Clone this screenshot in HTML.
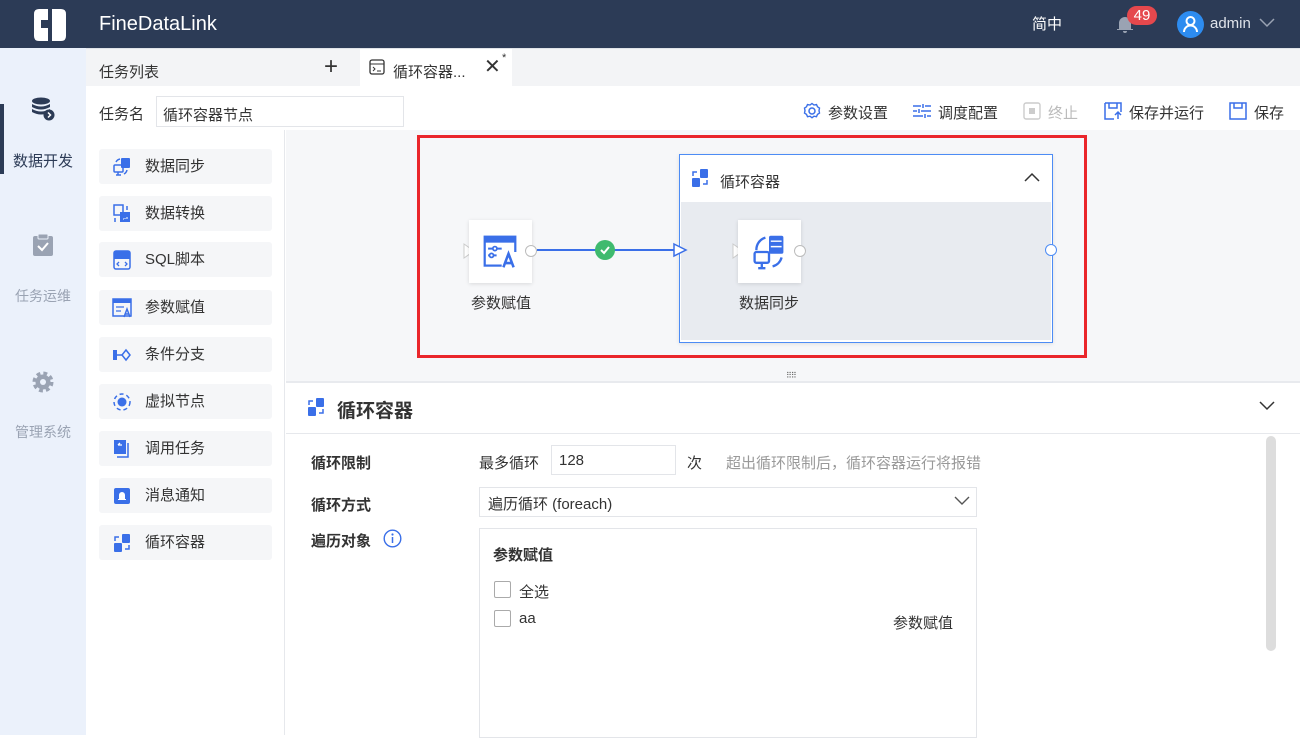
<!DOCTYPE html>
<html><head><meta charset="utf-8"><style>
*{margin:0;padding:0;box-sizing:border-box}
body{width:1300px;height:735px;overflow:hidden;font-family:"Liberation Sans","Noto Sans CJK SC",sans-serif;font-size:14px;color:#333;background:#fff;position:relative}
.a{position:absolute}
.top{left:0;top:0;width:1300px;height:48px;background:#2c3b56}
.nav{left:0;top:48px;width:86px;height:687px;background:#ebf1fb}
.navi{width:86px;text-align:center;font-size:14px;color:#9aa3b3}
.tabs{left:86px;top:48px;width:1214px;height:38px;background:#f3f4f6;border-top:1px solid #e0e3e8}
.pal{left:86px;top:130px;width:199px;height:605px;background:#fff;border-right:1px solid #e6e8ec}
.item{position:absolute;left:13px;width:173px;height:35px;background:#f5f6f8;border-radius:3px;font-size:15px;color:#333;line-height:35px;padding-left:46px}
.item svg{position:absolute;left:13px;top:8px}
.canvas{left:286px;top:130px;width:1014px;height:251px;background:#f6f7f9}
.tb{top:102px;font-size:15px;color:#333}
.lab{font-size:15px;font-weight:bold;color:#333}
</style></head><body>
<div class="a top">
 <svg class="a" style="left:33px;top:8px" width="34" height="34" viewBox="0 0 34 34"><path d="M1 6q0-5 5-5h22q5 0 5 5v22q0 5-5 5H6q-5 0-5-5z" fill="#fff"/><path d="M15 1h4v32h-4z" fill="#2c3b56"/><path d="M8 12h7v8H8z" fill="#2c3b56"/><path d="M19 20h6v13h-6z" fill="#2c3b56" opacity="0"/></svg>
 <div class="a" style="left:99px;top:13px;font-size:20px;color:#fff">FineDataLink</div>
 <div class="a" style="left:1032px;top:13px;font-size:15px;color:#fff">简中</div>
 <svg class="a" style="left:1116px;top:15px" width="18" height="18" viewBox="0 0 18 18"><path d="M3 14V8a6 6 0 0 1 12 0v6h2v1H1v-1z M7 16h4a2 2 0 0 1-4 0z" fill="#9aa3b3"/></svg>
 <div class="a" style="left:1127px;top:6px;width:30px;height:19px;background:#e5484d;border-radius:10px;color:#fff;font-size:15px;text-align:center;line-height:19px">49</div>
 <div class="a" style="left:1177px;top:11px;width:27px;height:27px;border-radius:50%;background:#2d8cf0"></div>
 <svg class="a" style="left:1177px;top:11px" width="27" height="27" viewBox="0 0 27 27"><circle cx="13.5" cy="10" r="4" fill="none" stroke="#fff" stroke-width="2"/><path d="M7 21a6.5 6.5 0 0 1 13 0" fill="none" stroke="#fff" stroke-width="2"/></svg>
 <div class="a" style="left:1210px;top:15px;font-size:15px;color:#dfe3ea">admin</div>
 <svg class="a" style="left:1259px;top:18px" width="16" height="10" viewBox="0 0 16 10"><path d="M1 1l7 7 7-7" fill="none" stroke="#9aa3b3" stroke-width="1.5"/></svg>
</div>
<div class="a nav">
 <div class="a" style="left:0;top:56px;width:4px;height:70px;background:#2c3b56"></div>
 <svg class="a" style="left:30px;top:48px" width="26" height="26" viewBox="0 0 26 26"><ellipse cx="11" cy="5" rx="9" ry="3.5" fill="#2c3b56"/><path d="M2 8q9 5 18 0v3q-9 5-18 0z M2 13q9 5 18 0v3q-9 5-18 0z" fill="#2c3b56"/><circle cx="19" cy="19" r="5.5" fill="#2c3b56"/><path d="M18 16.5l2.5 2.5-2.5 2.5" stroke="#fff" stroke-width="1.5" fill="none"/></svg>
 <div class="a navi" style="top:102px;color:#2c3b56;font-size:15px">数据开发</div>
 <svg class="a" style="left:32px;top:185px" width="22" height="24" viewBox="0 0 22 24"><rect x="1" y="3" width="20" height="20" rx="2" fill="#9aa3b3"/><rect x="6" y="1" width="10" height="5" rx="1" fill="#9aa3b3" stroke="#ebf1fb"/><path d="M6 13l4 4 6-7" stroke="#fff" stroke-width="2" fill="none"/></svg>
 <div class="a navi" style="top:238px">任务运维</div>
 <svg class="a" style="left:30px;top:321px" width="26" height="26" viewBox="0 0 26 26"><circle cx="13" cy="13" r="8" fill="none" stroke="#9aa3b3" stroke-width="5" stroke-dasharray="3.5 2.8"/><circle cx="13" cy="13" r="7.5" fill="#9aa3b3"/><circle cx="13" cy="13" r="3" fill="#ebf1fb"/></svg>
 <div class="a navi" style="top:374px">管理系统</div>
</div>
<div class="a tabs">
 <div class="a" style="left:13px;top:12px;font-size:15px;color:#333">任务列表</div>
 <div class="a" style="left:238px;top:4px;font-size:24px;color:#333;font-weight:300">+</div>
 <div class="a" style="left:274px;top:0;width:152px;height:38px;background:#fff"></div>
 <svg class="a" style="left:283px;top:10px" width="16" height="16" viewBox="0 0 16 16"><rect x="1" y="1" width="14" height="14" rx="2" fill="none" stroke="#333" stroke-width="1.3"/><path d="M1 5h14M4 8l2 2-2 2M8 12h4" stroke="#333" fill="none"/></svg>
 <div class="a" style="left:307px;top:12px;font-size:15px">循环容器...</div>
 <div class="a" style="left:398px;top:5px;font-size:20px;color:#333">✕</div>
 <div class="a" style="left:416px;top:3px;font-size:11px">*</div>
</div>
<div class="a" style="left:99px;top:103px;font-size:15px">任务名</div>
<div class="a" style="left:156px;top:96px;width:248px;height:31px;border:1px solid #e3e5e9;font-size:15px;padding:7px 6px">循环容器节点</div>
<svg class="a" style="left:803px;top:102px" width="18" height="18" viewBox="0 0 18 18"><circle cx="9" cy="9" r="3" fill="none" stroke="#3a6fe8" stroke-width="1.5"/><path d="M9 1.5l2 1.5 2.5-.5 1 2.3 2 1.3-.5 2.5.5 2.5-2 1.3-1 2.3-2.5-.5-2 1.5-2-1.5-2.5.5-1-2.3-2-1.3.5-2.5-.5-2.5 2-1.3 1-2.3 2.5.5z" fill="none" stroke="#3a6fe8" stroke-width="1.4"/></svg>
<div class="a tb" style="left:828px">参数设置</div>
<svg class="a" style="left:913px;top:104px" width="18" height="14" viewBox="0 0 18 14"><path d="M0 2h8M12 2h6M0 7h4M8 7h10M0 12h10M14 12h4M10 0v4M6 5v4M12 10v4" stroke="#3a6fe8" stroke-width="1.5"/></svg>
<div class="a tb" style="left:938px">调度配置</div>
<svg class="a" style="left:1023px;top:102px" width="18" height="18" viewBox="0 0 18 18"><rect x="1" y="1" width="16" height="16" rx="2" fill="none" stroke="#ccc" stroke-width="1.4"/><rect x="6" y="6" width="6" height="6" fill="#ccc"/></svg>
<div class="a tb" style="left:1048px;color:#bbb">终止</div>
<svg class="a" style="left:1104px;top:102px" width="18" height="18" viewBox="0 0 18 18"><path d="M1 1h16v9M1 1v16h9M5 1v5h8V1" fill="none" stroke="#3a6fe8" stroke-width="1.5"/><path d="M14 17v-6M11 13l3-3 3 3" stroke="#3a6fe8" stroke-width="1.5" fill="none"/></svg>
<div class="a tb" style="left:1129px">保存并运行</div>
<svg class="a" style="left:1229px;top:102px" width="18" height="18" viewBox="0 0 18 18"><path d="M1 1h16v16H1z M5 1v5h8V1" fill="none" stroke="#3a6fe8" stroke-width="1.5"/></svg>
<div class="a tb" style="left:1254px">保存</div>

<div class="a pal">
 <div class="item" style="top:19px"><svg width="20" height="20" viewBox="0 0 20 20"><rect x="9" y="1" width="9" height="10" rx="1" fill="#3a6fe8"/><rect x="2" y="8" width="9" height="7" rx="1" fill="none" stroke="#3a6fe8" stroke-width="1.5"/><path d="M4 18h5M6 15v3M4 5a6 6 0 0 1 4-3M15 13a6 6 0 0 1-3 4" stroke="#3a6fe8" stroke-width="1.5" fill="none"/></svg>数据同步</div>
 <div class="item" style="top:66px"><svg width="20" height="20" viewBox="0 0 20 20"><rect x="2" y="1" width="9" height="10" fill="none" stroke="#3a6fe8" stroke-width="1.5"/><rect x="8" y="8" width="10" height="10" fill="#3a6fe8"/><path d="M11 15h1M13 14v1M15 13v2" stroke="#fff"/><path d="M15 2v4M3 14v4" stroke="#3a6fe8" stroke-width="1.5"/></svg>数据转换</div>
 <div class="item" style="top:112px"><svg width="20" height="20" viewBox="0 0 20 20"><rect x="2" y="1" width="16" height="18" rx="2" fill="none" stroke="#3a6fe8" stroke-width="1.5"/><rect x="2" y="1" width="16" height="8" fill="#3a6fe8"/><path d="M7 12l-2 2 2 2M13 12l2 2-2 2" stroke="#3a6fe8" fill="none" stroke-width="1.3"/></svg>SQL脚本</div>
 <div class="item" style="top:160px"><svg width="20" height="20" viewBox="0 0 20 20"><rect x="1" y="1" width="18" height="17" fill="none" stroke="#3a6fe8" stroke-width="1.5"/><rect x="1" y="1" width="18" height="4" fill="#3a6fe8"/><path d="M4 9h8M4 13h5" stroke="#3a6fe8" stroke-width="1.3"/><path d="M12 19l3-8 3 8M13 16h4" stroke="#3a6fe8" stroke-width="1.5" fill="none"/></svg>参数赋值</div>
 <div class="item" style="top:207px"><svg width="20" height="20" viewBox="0 0 20 20"><rect x="1" y="5" width="4" height="10" fill="#3a6fe8"/><path d="M5 10h5" stroke="#3a6fe8" stroke-width="1.5"/><path d="M14 5l4 5-4 5-4-5z" fill="none" stroke="#3a6fe8" stroke-width="1.5"/></svg>条件分支</div>
 <div class="item" style="top:254px"><svg width="20" height="20" viewBox="0 0 20 20"><circle cx="10" cy="10" r="4.5" fill="#3a6fe8"/><circle cx="10" cy="10" r="8" fill="none" stroke="#3a6fe8" stroke-width="1.5" stroke-dasharray="4 3"/></svg>虚拟节点</div>
 <div class="item" style="top:301px"><svg width="20" height="20" viewBox="0 0 20 20"><rect x="2" y="1" width="12" height="14" fill="#3a6fe8"/><path d="M16 4v14H5" stroke="#3a6fe8" stroke-width="1.5" fill="none"/><path d="M6 6h4M6 6l2-2" stroke="#fff" stroke-width="1.3" fill="none"/></svg>调用任务</div>
 <div class="item" style="top:348px"><svg width="20" height="20" viewBox="0 0 20 20"><rect x="2" y="2" width="16" height="16" rx="2" fill="#3a6fe8"/><path d="M7 13V9a3 3 0 0 1 6 0v4h1v1H6v-1z" fill="#fff"/></svg>消息通知</div>
 <div class="item" style="top:395px"><svg width="20" height="20" viewBox="0 0 20 20"><rect x="10" y="1" width="8" height="9" rx="1" fill="#3a6fe8"/><rect x="2" y="10" width="8" height="9" rx="1" fill="#3a6fe8"/><path d="M3 8V4h4M17 12v4h-4" stroke="#3a6fe8" stroke-width="1.5" fill="none"/></svg>循环容器</div>
</div>

<div class="a canvas"></div>
<div class="a" style="left:679px;top:154px;width:374px;height:189px;border:1px solid #4d8cf5;background:#fff;box-shadow:0 1px 4px rgba(0,0,0,.1)">
 <div class="a" style="left:1px;top:47px;width:370px;height:138px;background:#e8ebf0"></div>
 <svg class="a" style="left:10px;top:13px" width="20" height="20" viewBox="0 0 20 20"><rect x="10" y="1" width="8" height="9" rx="1" fill="#3a6fe8"/><rect x="2" y="10" width="8" height="9" rx="1" fill="#3a6fe8"/><path d="M3 8V4h4M17 12v4h-4" stroke="#3a6fe8" stroke-width="1.5" fill="none"/></svg>
 <div class="a" style="left:40px;top:16px;font-size:15px">循环容器</div>
 <svg class="a" style="left:344px;top:17px" width="16" height="10" viewBox="0 0 16 10"><path d="M1 9l7-7 7 7" stroke="#333" stroke-width="1.5" fill="none"/></svg>
</div>
<div class="a" style="left:1045px;top:244px;width:12px;height:12px;border-radius:50%;border:1.5px solid #4d8cf5;background:#fff"></div>
<div class="a" style="left:537px;top:249px;width:138px;height:2px;background:#3a6fe8"></div>
<svg class="a" style="left:672px;top:242px" width="16" height="16" viewBox="0 0 16 16"><path d="M2 2l12 6-12 6z" fill="#fff" stroke="#3a6fe8" stroke-width="1.5"/></svg>
<div class="a" style="left:595px;top:240px;width:20px;height:20px;border-radius:50%;background:#3fba6e"></div>
<svg class="a" style="left:595px;top:240px" width="20" height="20" viewBox="0 0 20 20"><path d="M6 10l3 3 5-6" stroke="#fff" stroke-width="2" fill="none"/></svg>
<svg class="a" style="left:463px;top:243px" width="12" height="16" viewBox="0 0 12 16"><path d="M1 1l10 7-10 7z" fill="#fff" stroke="#ccc"/></svg>
<div class="a" style="left:469px;top:220px;width:63px;height:63px;background:#fff;box-shadow:0 1px 4px rgba(0,0,0,.12)"></div>
<svg class="a" style="left:483px;top:234px" width="34" height="36" viewBox="0 0 20 20"><rect x="1" y="1" width="18" height="17" fill="none" stroke="#3a6fe8" stroke-width="1.3"/><rect x="1" y="1" width="18" height="3.5" fill="#3a6fe8"/><path d="M3 8h8M3 12h5" stroke="#3a6fe8" stroke-width="1.2"/><circle cx="7" cy="8" r="1.2" fill="#fff" stroke="#3a6fe8"/><circle cx="5" cy="12" r="1.2" fill="#fff" stroke="#3a6fe8"/><rect x="11" y="10" width="9" height="10" fill="#fff"/><path d="M12 19l3-8 3 8M13 16.5h4" stroke="#3a6fe8" stroke-width="1.5" fill="none"/></svg>
<div class="a" style="left:525px;top:245px;width:12px;height:12px;border-radius:50%;border:1px solid #bbb;background:#fff"></div>
<div class="a" style="left:471px;top:292px;font-size:15px">参数赋值</div>
<svg class="a" style="left:732px;top:243px" width="12" height="16" viewBox="0 0 12 16"><path d="M1 1l10 7-10 7z" fill="#fff" stroke="#ccc"/></svg>
<div class="a" style="left:738px;top:220px;width:63px;height:63px;background:#fff;box-shadow:0 1px 4px rgba(0,0,0,.12)"></div>
<svg class="a" style="left:751px;top:234px" width="36" height="36" viewBox="0 0 20 20"><rect x="10" y="1" width="8" height="10" rx="1" fill="#3a6fe8"/><path d="M11 4h6M11 7h6" stroke="#fff" stroke-width=".8"/><rect x="2" y="10" width="8" height="6" rx="1" fill="#fff" stroke="#3a6fe8" stroke-width="1.3"/><path d="M4 19h4M6 16v3M3 9a7 7 0 0 1 5-7M17 13a7 7 0 0 1-5 5" stroke="#3a6fe8" stroke-width="1.3" fill="none"/></svg>
<div class="a" style="left:794px;top:245px;width:12px;height:12px;border-radius:50%;border:1px solid #bbb;background:#fff"></div>
<div class="a" style="left:739px;top:292px;font-size:15px">数据同步</div>
<div class="a" style="left:417px;top:135px;width:670px;height:223px;border:3px solid #ea262b"></div>
<div class="a" style="left:786px;top:371px;font-size:8px;color:#666;letter-spacing:-1px">⠿⠿</div>

<div class="a" style="left:286px;top:381px;width:1014px;height:2px;background:#e8eaee"></div>
<svg class="a" style="left:306px;top:397px" width="20" height="20" viewBox="0 0 20 20"><rect x="10" y="1" width="8" height="9" rx="1" fill="#3a6fe8"/><rect x="2" y="10" width="8" height="9" rx="1" fill="#3a6fe8"/><path d="M3 8V4h4M17 12v4h-4" stroke="#3a6fe8" stroke-width="1.5" fill="none"/></svg>
<div class="a" style="left:337px;top:396px;font-size:19px;font-weight:bold;color:#333">循环容器</div>
<svg class="a" style="left:1259px;top:401px" width="16" height="10" viewBox="0 0 16 10"><path d="M1 1l7 7 7-7" stroke="#333" stroke-width="1.5" fill="none"/></svg>
<div class="a" style="left:286px;top:433px;width:1014px;height:1px;background:#e6e8ec"></div>
<div class="a" style="left:1266px;top:436px;width:10px;height:215px;background:#ddd;border-radius:5px"></div>
<div class="a lab" style="left:311px;top:452px">循环限制</div>
<div class="a" style="left:479px;top:452px;font-size:15px">最多循环</div>
<div class="a" style="left:551px;top:445px;width:125px;height:30px;border:1px solid #e3e5e9;font-size:15px;padding:6px 7px">128</div>
<div class="a" style="left:687px;top:452px;font-size:15px">次</div>
<div class="a" style="left:726px;top:452px;font-size:15px;color:#999">超出循环限制后，循环容器运行将报错</div>
<div class="a lab" style="left:311px;top:494px">循环方式</div>
<div class="a" style="left:479px;top:487px;width:498px;height:30px;border:1px solid #e3e5e9;font-size:15px;padding:5px 8px">遍历循环 (foreach)</div>
<svg class="a" style="left:954px;top:496px" width="16" height="10" viewBox="0 0 16 10"><path d="M1 1l7 7 7-7" stroke="#555" stroke-width="1.4" fill="none"/></svg>
<div class="a lab" style="left:311px;top:530px">遍历对象</div>
<svg class="a" style="left:383px;top:529px" width="19" height="19" viewBox="0 0 19 19"><circle cx="9.5" cy="9.5" r="8.3" fill="none" stroke="#3a6fe8" stroke-width="1.4"/><circle cx="9.5" cy="5.5" r="1.1" fill="#3a6fe8"/><path d="M9.5 8v6" stroke="#3a6fe8" stroke-width="1.5"/></svg>
<div class="a" style="left:479px;top:528px;width:498px;height:210px;border:1px solid #e3e5e9"></div>
<div class="a" style="left:493px;top:544px;font-size:15px;font-weight:bold;color:#333">参数赋值</div>
<div class="a" style="left:494px;top:581px;width:17px;height:17px;border:1px solid #aaa;border-radius:2px"></div>
<div class="a" style="left:519px;top:581px;font-size:15px">全选</div>
<div class="a" style="left:494px;top:610px;width:17px;height:17px;border:1px solid #aaa;border-radius:2px"></div>
<div class="a" style="left:519px;top:610px;font-size:15px">aa</div>
<div class="a" style="left:893px;top:612px;font-size:15px">参数赋值</div>
</body></html>
